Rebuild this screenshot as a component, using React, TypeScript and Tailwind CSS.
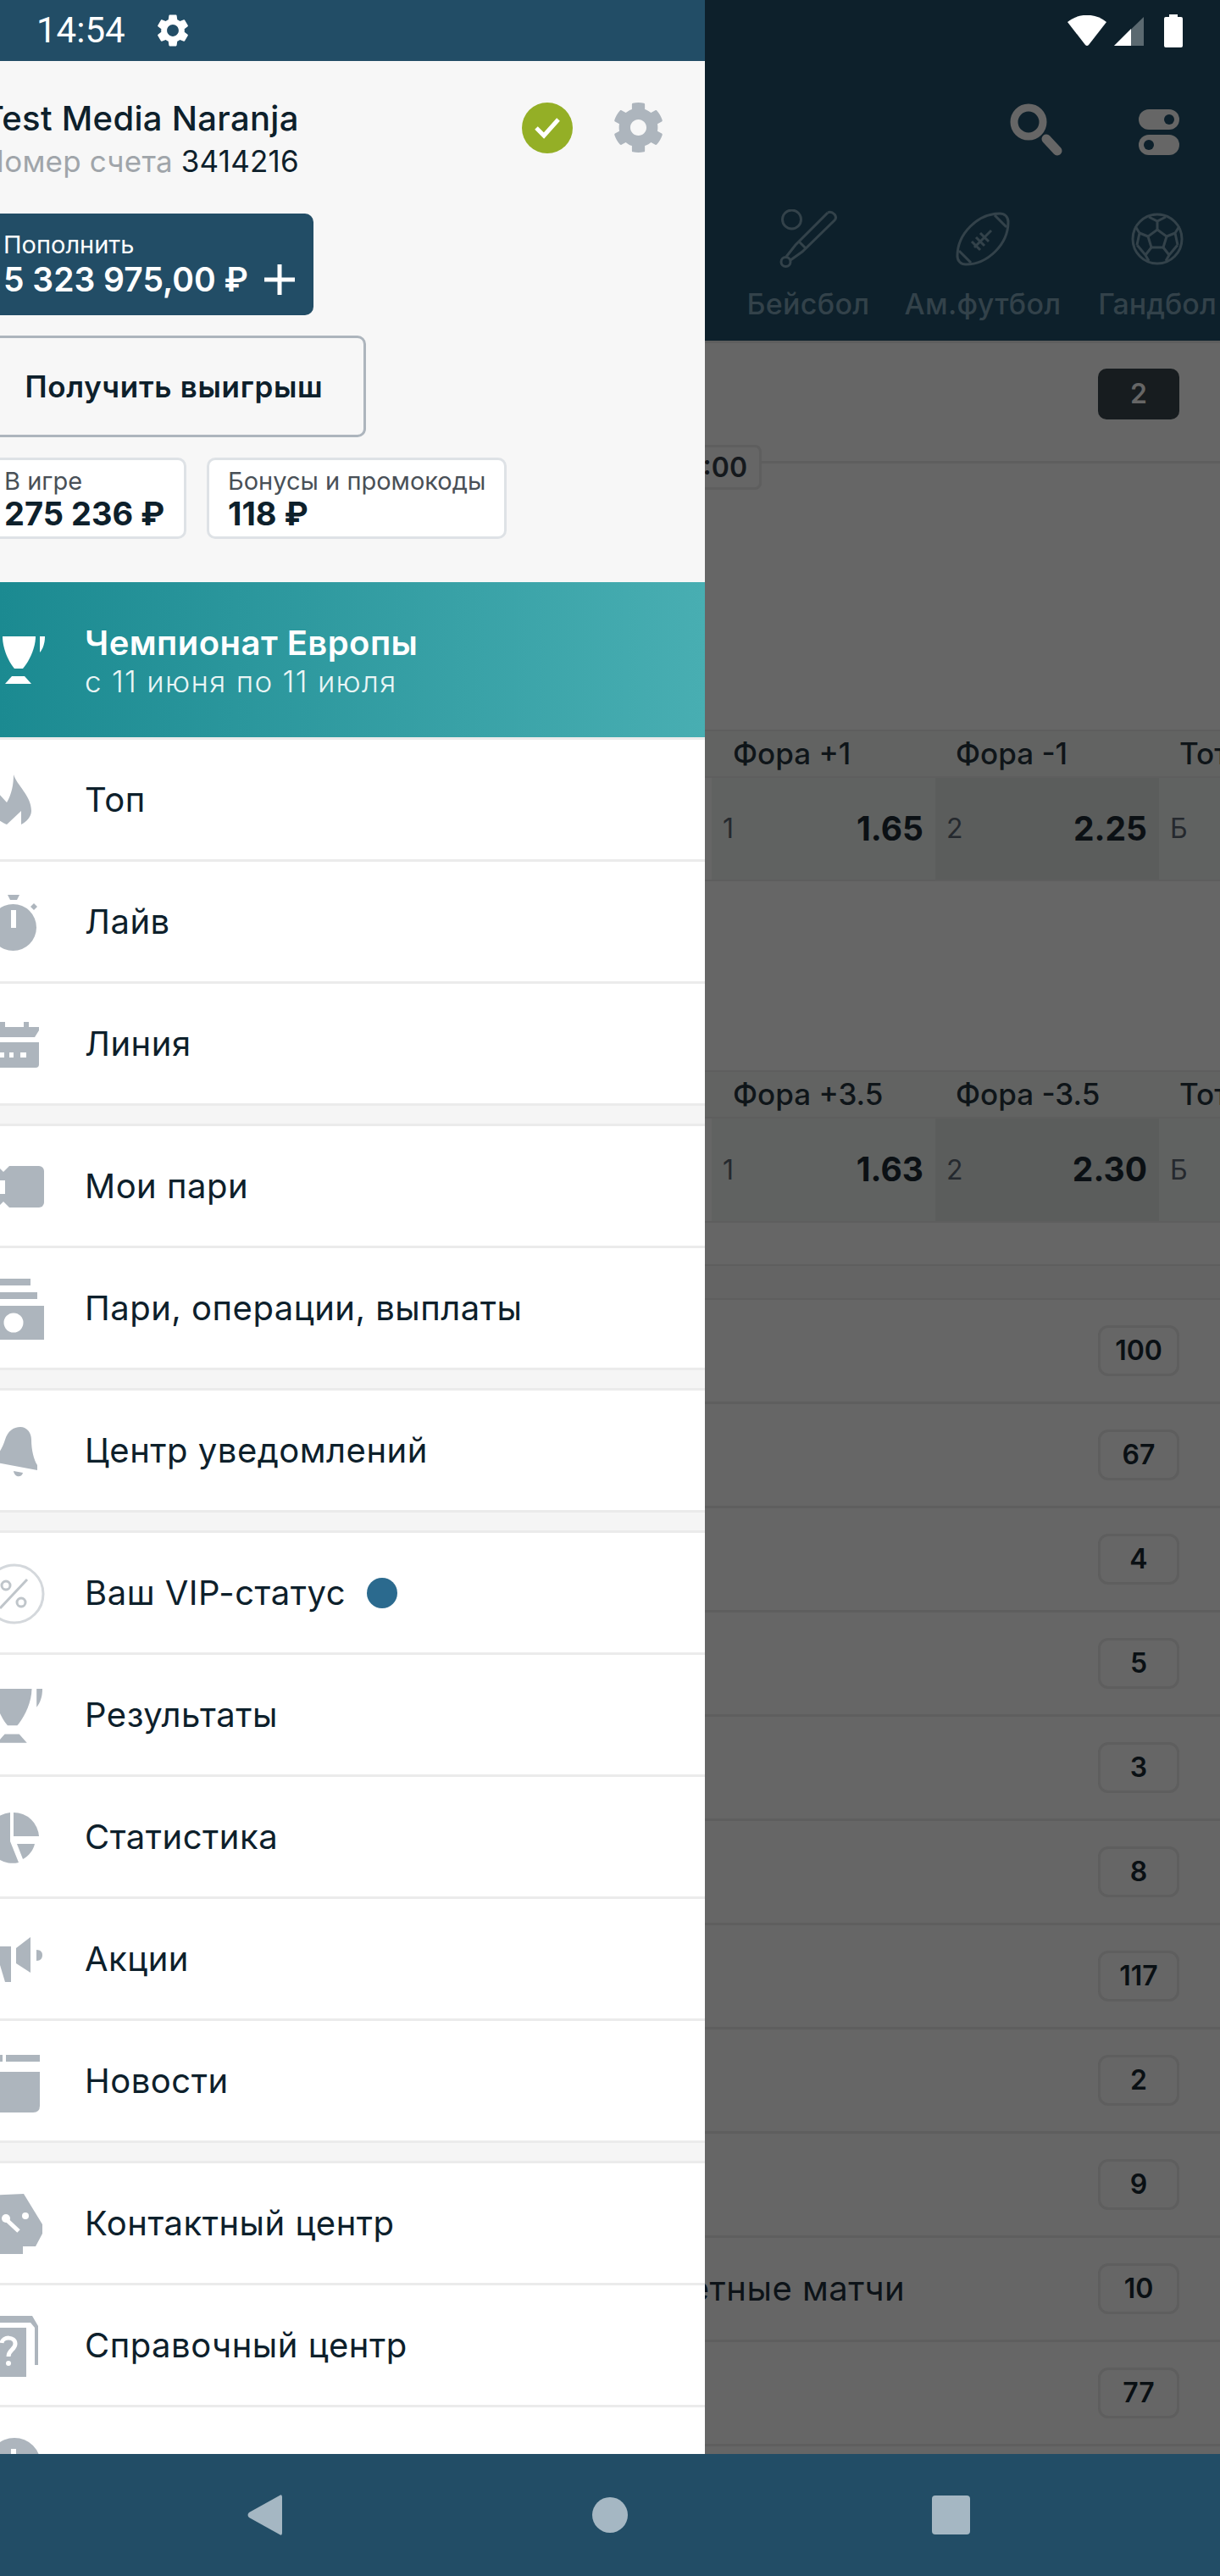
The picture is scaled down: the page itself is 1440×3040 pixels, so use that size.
import type { ReactNode } from "react";
import { FaCog } from "react-icons/fa";
import { MdSettings } from "react-icons/md";

const gray = "#adb5bd";
const badgeCounts = ["100", "67", "4", "5", "3", "8", "117", "2", "9", "10", "77"];

function Trophy({ fill, transform }: { fill: string; transform: string }) {
  return (
    <g fill={fill} transform={transform}>
      <path d="M3 0H42C42 14 34 30 27 38H17C10 30 3 14 3 0Z" />
      <path d="M6 56L14 47H29L37 56Z" />
      <path d="M47 0H53C53 8 51 14 47 19Z" />
    </g>
  );
}

// all menu icons are drawn in row coordinates, the drawer clips their left side
const icons: Record<string, ReactNode> = {
  flame: (
    <path d="M16 41C20 54 37 66 37 84C37 91 31 97 25 100L25 84L8 100C2 97-8 92-12 84C-14 76-8 68-3 62L8 74C14 64 16 52 16 41Z" fill={gray} />
  ),
  watch: (
    <>
      <circle cx="15.5" cy="77.5" r="27.5" fill={gray} />
      <rect x="13" y="57" width="6" height="21" fill="#fff" />
      <polygon points="9,39 23,39 20,45 12,45" fill={gray} />
      <polygon points="40,49 44,53 40,57 36,53" fill={gray} />
    </>
  ),
  calendar: (
    <g fill={gray}>
      <rect x="0" y="45" width="6" height="7" />
      <rect x="28" y="45" width="6" height="7" />
      <polygon points="-20,51 46,51 46,55 41,63 -20,63" />
      <path d="M-20 69H46V95Q46 99 42 99H-20Z" />
      <rect x="0" y="81" width="5" height="6" fill="#fff" />
      <rect x="11" y="81" width="5" height="6" fill="#fff" />
      <rect x="24" y="81" width="7" height="6" fill="#fff" />
    </g>
  ),
  ticket: (
    <>
      <rect x="-20" y="47" width="72" height="49" rx="6" fill={gray} />
      <polygon points="-3,47 4,54 11,47" fill="#fff" />
      <polygon points="-3,96 4,89 11,96" fill="#fff" />
      <rect x="0" y="64" width="6" height="16" fill="#fff" />
    </>
  ),
  receipt: (
    <>
      <rect x="-20" y="36" width="56" height="8" fill={gray} />
      <rect x="-20" y="52" width="64" height="8" fill={gray} />
      <rect x="-20" y="68" width="72" height="40" fill={gray} />
      <circle cx="16" cy="88" r="11.5" fill="#fff" />
    </>
  ),
  bell: (
    <g fill={gray}>
      <path d="M24 43C32 43 37 50 37 58C37 70 40 82 44 88L44 94L-10 84C-2 76 3 68 6 58C9 48 16 43 24 43Z" />
      <path d="M16 95L27 97C26 103 17 103 16 95Z" />
    </g>
  ),
  percent: (
    <g fill="none">
      <circle cx="17" cy="72" r="34" stroke="#d4d8dc" strokeWidth="3" />
      <circle cx="7" cy="62" r="5" stroke="#bfc5ca" strokeWidth="3" />
      <circle cx="25" cy="82" r="5" stroke="#bfc5ca" strokeWidth="3" />
      <path d="M32 55L0 89" stroke="#bfc5ca" strokeWidth="3" />
    </g>
  ),
  trophy: <Trophy fill={gray} transform="translate(-10.4 40) scale(1.14)" />,
  pie: (
    <g fill={gray}>
      <path d="M16 42A30 30 0 0 1 46 70H16Z" />
      <path d="M20 79H41C39 87 34 93 27 97Z" />
      <path d="M12 42A30 30 0 1 0 22 101L12 76Z" />
    </g>
  ),
  horn: (
    <g fill={gray}>
      <polygon points="36,45 36,87 19,76 19,58" />
      <path d="M43 60C48 60 50 63 50 66C50 70 48 73 43 73Z" />
      <rect x="-20" y="56" width="33" height="22" />
      <polygon points="0,78 13,78 13,98 6,98" />
    </g>
  ),
  news: (
    <g fill={gray}>
      <rect x="7" y="40" width="40" height="8" />
      <rect x="-20" y="40" width="23" height="8" />
      <path d="M-20 60H47V100Q47 108 39 108H-20Z" />
    </g>
  ),
  head: (
    <>
      <path d="M-20 38L28 36L50 72V83L42 98H27V107H-20Z" fill={gray} />
      <path d="M6 65L22 80" stroke="#fff" strokeWidth="5" />
      <circle cx="7" cy="65" r="5" fill="#fff" />
      <circle cx="30" cy="62" r="4" fill="#fff" />
    </>
  ),
  help: (
    <>
      <path d="M-20 36H38L45 48V94H41V50L36 44H-20Z" fill={gray} />
      <rect x="-20" y="50" width="51" height="58" fill={gray} />
      <path d="M2 68C3 60 18 60 18 69C18 76 10 76 10 84" fill="none" stroke="#fff" strokeWidth="5" />
      <circle cx="10" cy="92" r="3" fill="#fff" />
    </>
  ),
  info: (
    <>
      <circle cx="17" cy="67" r="31" fill={gray} />
      <rect x="13" y="49" width="6" height="30" fill="#fff" />
    </>
  ),
};

const menuGroups = [
  [
    { icon: "flame", label: "Топ" },
    { icon: "watch", label: "Лайв" },
    { icon: "calendar", label: "Линия" },
  ],
  [
    { icon: "ticket", label: "Мои пари" },
    { icon: "receipt", label: "Пари, операции, выплаты" },
  ],
  [{ icon: "bell", label: "Центр уведомлений" }],
  [
    { icon: "percent", label: "Ваш VIP-статус", dot: true },
    { icon: "trophy", label: "Результаты" },
    { icon: "pie", label: "Статистика" },
    { icon: "horn", label: "Акции" },
    { icon: "news", label: "Новости" },
  ],
  [
    { icon: "head", label: "Контактный центр" },
    { icon: "help", label: "Справочный центр" },
    { icon: "info", label: "Информация о бонусах" },
  ],
];

function StatusIcons() {
  return (
    <div className="flex h-[72px] items-center justify-end gap-[8px] pr-[44px]">
      <svg width="46" height="36" viewBox="0 0 46 36" className="mr-[1px]">
        <path d="M0 8C13-3 33-3 46 8L25 35Q23 37 21 35Z" fill="#fff" />
      </svg>
      <svg width="35" height="34" viewBox="0 0 35 34" className="mr-[16px] mt-[2px]">
        <polygon points="0,34 35,0 35,34" fill="#5b6970" />
        <polygon points="0,34 20,14 20,34" fill="#fff" />
      </svg>
      <svg width="22" height="39" viewBox="0 0 22 39">
        <path d="M6 0H16V3H20Q22 3 22 5V37Q22 39 20 39H2Q0 39 0 37V5Q0 3 2 3H6Z" fill="#fff" />
      </svg>
    </div>
  );
}

function Toolbar() {
  return (
    <div className="flex h-[175px] items-start justify-end gap-[88px] pr-[48px] pt-[50px]">
      <svg width="64" height="64" viewBox="0 0 64 64">
        <circle cx="22" cy="22" r="17" fill="none" stroke="#666" strokeWidth="9" />
        <path d="M43 42L56 56" stroke="#666" strokeWidth="11" strokeLinecap="round" />
      </svg>
      <div className="mt-[7px] flex flex-col gap-[6px]">
        <div className="flex h-[24px] w-[48px] items-center justify-end rounded-full bg-[#666] pr-[6px]">
          <div className="size-[12px] rounded-full bg-[#0d202b]" />
        </div>
        <div className="flex h-[24px] w-[48px] items-center rounded-full bg-[#666] pl-[6px]">
          <div className="size-[12px] rounded-full bg-[#0d202b]" />
        </div>
      </div>
    </div>
  );
}

const tabStroke = "#33424a";

function SportTabs() {
  return (
    <div className="flex h-[155px] pl-[851px]">
      <div className="flex w-[206px] shrink-0 flex-col items-center">
        <svg width="70" height="70" viewBox="0 0 70 70" fill="none" stroke={tabStroke} strokeWidth="3">
          <circle cx="15.5" cy="12" r="11" />
          <path d="M58 4Q62 2 66 6Q69 10 66 13L28 50L14 60" />
          <path d="M58 4L20 42L9 56" />
          <circle cx="8.5" cy="62" r="5.5" />
          <path d="M24 38L32 46" />
        </svg>
        <div className="mt-[22px] whitespace-nowrap text-[34px] font-medium leading-[40px] tracking-[0.3px] text-[#33424a]">Бейсбол</div>
      </div>
      <div className="flex w-[206px] shrink-0 flex-col items-center">
        <svg width="64" height="64" viewBox="0 0 64 64" fill="none" stroke={tabStroke} strokeWidth="3" className="mt-[3px]">
          <path d="M52 2C58 2 62 6 62 12C62 38 38 62 12 62C6 62 2 58 2 52C2 26 26 2 52 2Z" />
          <path d="M4 46L18 60M46 4L60 18M22 42L42 22M24 30L34 40M29 25L39 35M19 35L29 45" />
        </svg>
        <div className="mt-[25px] whitespace-nowrap text-[34px] font-medium leading-[40px] tracking-[0.3px] text-[#33424a]">Ам.футбол</div>
      </div>
      <div className="flex w-[206px] shrink-0 flex-col items-center">
        <svg width="62" height="62" viewBox="0 0 62 62" fill="none" stroke={tabStroke} strokeWidth="3" className="mt-[4px]">
          <circle cx="31" cy="31" r="29" />
          <polygon points="31,20 42,28 38,41 24,41 20,28" />
          <path d="M31 20V10M42 28L52 24M38 41L45 50M24 41L17 50M20 28L10 24M21 5L31 10L41 5M52 24L57 16M52 24L55 38M45 50L41 57M45 50L55 38M17 50L21 57M17 50L7 38M10 24L5 16M10 24L7 38" />
        </svg>
        <div className="mt-[26px] whitespace-nowrap text-[34px] font-medium leading-[40px] text-[#33424a]">Гандбол</div>
      </div>
    </div>
  );
}

function OddsCell({ side, value, tone }: { side: string; value: string; tone: string }) {
  return (
    <div className={`flex w-[264px] shrink-0 items-center justify-between pl-[13px] pr-[14px] ${tone}`}>
      <span className="text-[32px] text-[#25292e]">{side}</span>
      <span className="text-[39px] font-bold text-[#0b1014]">{value}</span>
    </div>
  );
}

function OddsBlock({ left, right, total, a, b, rowHeight }: { left: string; right: string; total: string; a: string; b: string; rowHeight: string }) {
  return (
    <div className="border-y-[2px] border-[#5e5e5e]">
      <div className="flex h-[53px] items-center bg-[#626362] pl-[840px] text-[35px] font-medium text-[#0f1519]">
        <div className="w-[264px] shrink-0 pl-[25px]">{left}</div>
        <div className="w-[264px] shrink-0 pl-[24px]">{right}</div>
        <div className="w-[264px] shrink-0 whitespace-nowrap pl-[24px]">{total}</div>
      </div>
      <div className={`flex border-t-[2px] border-[#5e5e5e] pl-[840px] ${rowHeight}`}>
        <OddsCell side="1" value={a} tone="bg-[#606261]" />
        <OddsCell side="2" value={b} tone="bg-[#5b5d5c]" />
        <OddsCell side="Б" value="1.90" tone="bg-[#606261]" />
      </div>
    </div>
  );
}

function CountRow({ count, title }: { count: string; title?: string }) {
  return (
    <div className="flex h-[123px] items-center justify-between border-b-[3px] border-[#5e5e5e] pl-[742px] pr-[48px]">
      <span className="whitespace-nowrap text-[40px] tracking-[0.5px] text-[#0d1318]">{title}</span>
      <div className="flex h-[60px] w-[96px] items-center justify-center rounded-[12px] border-[3px] border-[#5e5e5e] text-[32px] font-semibold text-[#0a1014]">
        {count}
      </div>
    </div>
  );
}

function BackgroundPage() {
  return (
    <div className="h-full w-[1440px] bg-[#666666]">
      <div className="h-[402px] overflow-hidden bg-[#0d202b]">
        <StatusIcons />
        <Toolbar />
        <SportTabs />
      </div>
      <div className="relative h-[459px] border-t-[3px] border-[#5e5e5e]">
        <div className="flex h-[142px] items-start justify-end border-b-[3px] border-[#5e5e5e] pr-[48px] pt-[30px]">
          <div className="flex h-[60px] w-[96px] items-center justify-center rounded-[10px] bg-[#171c1f] text-[32px] font-semibold text-[#666]">2</div>
        </div>
        <div className="absolute right-[541px] top-[120px] flex h-[53px] items-center rounded-[8px] border-[3px] border-[#5e5e5e] bg-[#666] px-[14px] text-[32px] font-semibold text-[#15191d]">
          18:00
        </div>
      </div>
      <OddsBlock left="Фора +1" right="Фора -1" total="Тотал 2.5" a="1.65" b="2.25" rowHeight="h-[122px]" />
      <div className="h-[223px]" />
      <OddsBlock left="Фора +3.5" right="Фора -3.5" total="Тотал 5.5" a="1.63" b="2.30" rowHeight="h-[123px]" />
      <div className="h-[49px]" />
      <div className="h-[42px] border-y-[2px] border-[#5e5e5e] bg-[#646464]" />
      {badgeCounts.map((count) => (
        <CountRow key={count} count={count} title={count === "10" ? "Зачетные матчи" : undefined} />
      ))}
    </div>
  );
}

function MenuRow({ icon, label, dot }: { icon: string; label: string; dot?: boolean }) {
  return (
    <div className="flex h-[144px] shrink-0 items-center border-b-[3px] border-[#ebebeb] bg-white">
      <svg width="100" height="141" viewBox="0 0 100 141" className="shrink-0">
        {icons[icon]}
      </svg>
      <span className="whitespace-nowrap text-[40px] leading-[48px] tracking-[0.5px] text-[#0d202b]">{label}</span>
      {dot && <span className="ml-[25px] size-[36px] rounded-full bg-[#2b6a8e]" />}
    </div>
  );
}

function AccountHeader() {
  return (
    <div className="flex h-[615px] shrink-0 flex-col bg-[#f7f7f7] pt-[44px]">
      <div className="flex items-start justify-between pr-[48px]">
        <div className="-ml-[21px]">
          <div className="whitespace-nowrap text-[40px] font-medium leading-[48px] tracking-[0.3px] text-[#0d202b]">Test Media Naranja</div>
          <div className="mt-[8px] whitespace-nowrap text-[35px] leading-[36px] tracking-[0.2px] text-[#a0a5aa]">
            Номер счета <span className="text-[#0d202b]">3414216</span>
          </div>
        </div>
        <div className="mt-[4px] flex items-center gap-[47px]">
          <div className="flex size-[60px] items-center justify-center rounded-full bg-[#94af26]">
            <svg width="32" height="26" viewBox="0 0 32 26" fill="none" stroke="#fff" strokeWidth="5">
              <path d="M3 13L12 22L29 3" />
            </svg>
          </div>
          <FaCog size={61} color={gray} />
        </div>
      </div>
      <div className="mt-[44px] -ml-[21px] flex h-[120px] w-[391px] flex-col justify-center rounded-[10px] bg-[#224d66] pl-[25px] text-white">
        <div className="text-[29px] leading-[36px]">Пополнить</div>
        <div className="flex items-center">
          <span className="whitespace-nowrap text-[39px] font-semibold leading-[46px]">5 323 975,00 ₽</span>
          <svg width="36" height="36" viewBox="0 0 36 36" className="ml-[19px]">
            <path d="M18 0V36M0 18H36" stroke="#fff" strokeWidth="5" />
          </svg>
        </div>
      </div>
      <div className="mt-[24px] -ml-[21px] flex h-[120px] w-[453px] items-center justify-center rounded-[10px] border-[3px] border-[#adb5bd] text-[35px] font-semibold tracking-[0.7px] text-[#0d202b]">
        Получить выигрыш
      </div>
      <div className="mt-[24px] -ml-[21px] flex gap-[24px]">
        <div className="h-[96px] w-[241px] rounded-[10px] border-[3px] border-[#dee2e6] bg-white pl-[23px] pt-[8px]">
          <div className="text-[29px] leading-[34px] text-[#495057]">В игре</div>
          <div className="whitespace-nowrap text-[38px] font-bold leading-[42px] text-[#0d202b]">275 236 ₽</div>
        </div>
        <div className="h-[96px] w-[354px] rounded-[10px] border-[3px] border-[#dee2e6] bg-white pl-[22px] pt-[8px]">
          <div className="whitespace-nowrap text-[29px] leading-[34px] text-[#495057]">Бонусы и промокоды</div>
          <div className="whitespace-nowrap text-[38px] font-bold leading-[42px] text-[#0d202b]">118 ₽</div>
        </div>
      </div>
    </div>
  );
}

function Drawer() {
  return (
    <div className="absolute inset-y-0 left-0 flex w-[832px] flex-col overflow-hidden bg-white">
      <div className="flex h-[72px] shrink-0 items-center bg-[#224d66] pl-[43px] text-white">
        <span className="font-['Roboto',sans-serif] text-[42px] leading-none">14:54</span>
        <MdSettings size={46} color="#fff" className="ml-[33px]" />
      </div>
      <AccountHeader />
      <div className="flex h-[186px] shrink-0 items-center border-b-[3px] border-[#ebebeb] bg-[linear-gradient(90deg,#1b8a91,#48aeb2)] text-white">
        <svg width="100" height="183" viewBox="0 0 100 183" className="shrink-0">
          <Trophy fill="#fff" transform="translate(0 64)" />
        </svg>
        <div>
          <div className="whitespace-nowrap text-[40px] font-semibold leading-[50px] tracking-[0.45px]">Чемпионат Европы</div>
          <div className="whitespace-nowrap text-[35px] font-light leading-[40px] tracking-[1.3px] text-[#e9f5f5]">с 11 июня по 11 июля</div>
        </div>
      </div>
      {menuGroups.map((group, i) => (
        <div key={group[0].label} className={`shrink-0 ${i > 0 ? "border-t-[3px] border-[#ebebeb]" : ""}`}>
          {group.map((item) => (
            <MenuRow key={item.label} {...item} />
          ))}
          {i < menuGroups.length - 1 && <div className="h-[21px] bg-[#f5f5f5]" />}
        </div>
      ))}
    </div>
  );
}

function NavBar() {
  return (
    <div className="flex h-[144px] shrink-0 items-center bg-[#224d66] pl-[292px]">
      <svg width="41" height="48" viewBox="0 0 41 48">
        <path d="M38 1Q41-1 41 3V45Q41 49 38 47L2 27Q-1 24 2 21Z" fill="#a5b7c3" />
      </svg>
      <div className="ml-[366px] size-[42px] rounded-full bg-[#a5b7c3]" />
      <div className="ml-[359px] h-[46px] w-[45px] rounded-[4px] bg-[#a5b7c3]" />
    </div>
  );
}

export default function App() {
  return (
    <div className="flex h-[3040px] w-[1440px] flex-col overflow-hidden font-['Inter',sans-serif]">
      <div className="relative min-h-0 flex-1 overflow-hidden">
        <BackgroundPage />
        <Drawer />
      </div>
      <NavBar />
    </div>
  );
}
